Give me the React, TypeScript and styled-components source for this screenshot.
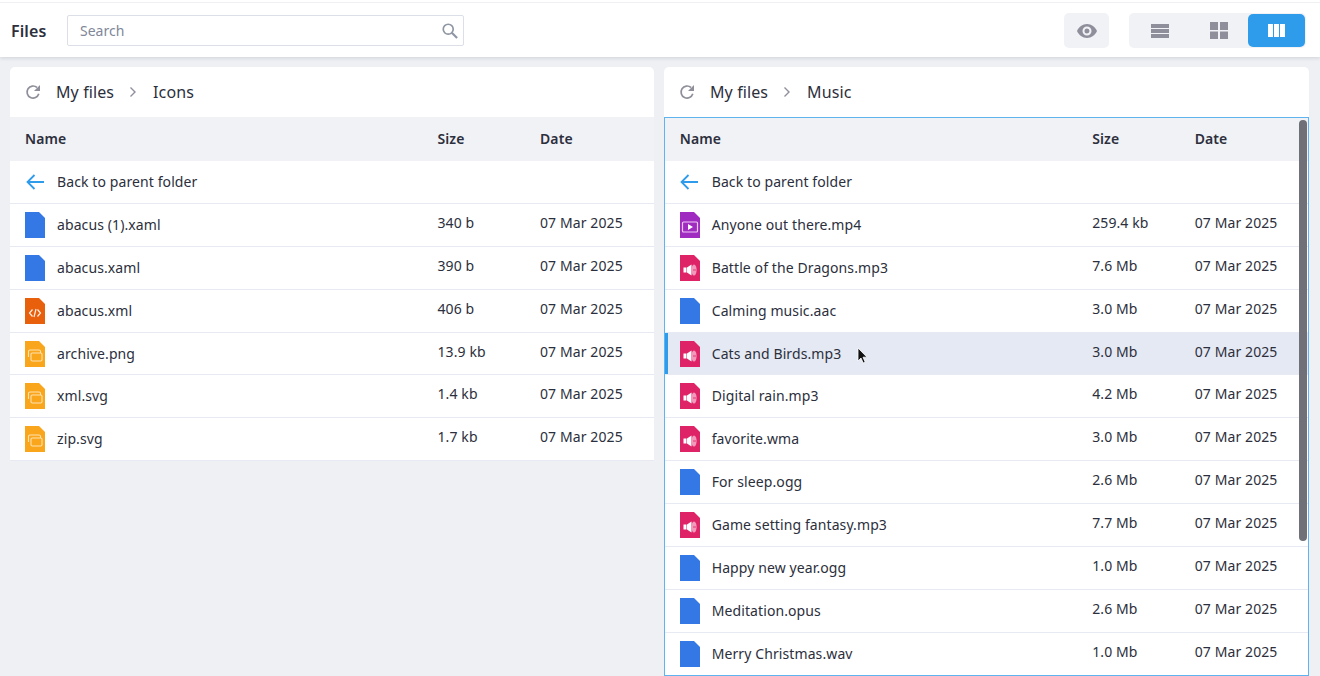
import React from 'react';
import styled, { createGlobalStyle } from 'styled-components';

const GlobalStyle = createGlobalStyle`
  html, body {
    margin: 0;
    height: 100%;
    overflow: hidden;
    background: #eef0f4;
    font-family: "Noto Sans", "Open Sans", sans-serif;
    color: #2c2f3c;
  }
  * { box-sizing: border-box; }
`;

/* Page */
const Page = styled.div`
  height: 676px;
  display: flex;
  flex-direction: column;
  overflow: hidden;
`;

/* Toolbar */
const Toolbar = styled.header`
  height: 57px;
  flex: none;
  display: flex;
  align-items: center;
  padding: 4px 14px 0 11px;
  background: #fff;
  box-shadow: inset 0 2px 0 #fff, inset 0 3px 0 #eef0f4, 0 1px 4px rgba(44, 47, 60, 0.16);
  position: relative;
  z-index: 1;
`;

const Title = styled.div`
  font-size: 16px;
  font-weight: 600;
  line-height: 22px;
  width: 56px;
  letter-spacing: 0.1px;
`;

const SearchBox = styled.div`
  width: 397px;
  height: 31px;
  display: flex;
  align-items: center;
  justify-content: space-between;
  padding: 0 5px 0 12px;
  border: 1px solid #dcdfe8;
  border-radius: 2px;
  background: #fff;
  font-size: 14px;
  color: #7f8799;
`;

const Spacer = styled.div`
  flex: 1;
`;

const ToolGroup = styled.div`
  display: flex;
  align-items: center;
  height: 35px;
  padding: 1px;
  border-radius: 5px;
  background: #f1f2f6;
`;

const EyeGroup = styled(ToolGroup)`
  width: 45px;
  justify-content: center;
  margin-right: 20px;
`;

const ViewButton = styled.div<{ $active?: boolean }>`
  width: ${p => (p.$active ? '57px' : '59px')};
  height: 33px;
  display: flex;
  align-items: center;
  justify-content: center;
  border-radius: 5px;
  background: ${p => (p.$active ? '#2f9ceb' : 'transparent')};
  color: ${p => (p.$active ? '#fff' : '#8f8f9c')};
`;

/* Panels */
const Panels = styled.main`
  flex: 1;
  min-height: 0;
  display: grid;
  grid-template-columns: 644px 645px;
  gap: 10px;
  padding: 10px 11px 0 10px;
`;

const Panel = styled.section`
  min-height: 0;
  display: flex;
  flex-direction: column;
  border-radius: 5px 5px 0 0;
  overflow: hidden;
`;

const Breadcrumbs = styled.div`
  height: 50px;
  flex: none;
  display: flex;
  align-items: center;
  padding-left: 15px;
  background: #fff;
  font-size: 16px;
  letter-spacing: 0.1px;
  color: #2c2f3c;
`;

const Refresh = styled.span`
  display: flex;
  width: 31px;
  color: #8f8f9c;
`;

const Chevron = styled.span`
  display: flex;
  margin: 0 16px 0 15px;
  color: #8f8f9c;
`;

const Table = styled.div<{ $focused?: boolean }>`
  position: relative;
  flex: 1;
  min-height: 0;
  overflow: hidden;
  padding-left: ${p => (p.$focused ? '0.7px' : '0')};

  &::after {
    content: '';
    display: ${p => (p.$focused ? 'block' : 'none')};
    position: absolute;
    inset: 0;
    border: 1px solid #5fb3ee;
    pointer-events: none;
  }
`;

const Row = styled.div`
  display: grid;
  grid-template-columns: 412.5px 102.5px 1fr;
  align-items: center;
  height: 42.9px;
  padding-left: 15px;
  font-size: 14px;
  letter-spacing: 0.1px;
  background: #fff;
  border-bottom: 1px solid #e8eaf3;
`;

const HeadRow = styled(Row)`
  height: 44px;
  padding-bottom: 1px;
  background: #f1f2f6;
  border-bottom: none;
  font-weight: 600;
`;

const DataRow = styled(Row)<{ $selected?: boolean }>`
  position: relative;
  background: ${p => (p.$selected ? '#e5e9f3' : '#fff')};
  box-shadow: ${p => (p.$selected ? 'inset 3px 0 0 #2f9ceb' : 'none')};
`;

const NameCell = styled.div`
  display: flex;
  align-items: center;
  gap: 12px;
`;

const FileName = styled.span`
  margin-top: -1px;
`;

const MetaCell = styled.div`
  margin-top: -5px;
`;

const BackIcon = styled.span`
  display: flex;
  width: 20px;
  justify-content: center;
  color: #2f9ceb;
`;

const Scrollbar = styled.div`
  position: absolute;
  top: 3px;
  right: 2px;
  width: 8px;
  height: 421px;
  border-radius: 4px;
  background: #6f7078;
`;

const Cursor = styled.svg`
  position: absolute;
  left: 192px;
  top: 14px;
`;

/* Icons */
const iconColors = {
  file: '#3478e5',
  code: '#e9600c',
  image: '#f9a61c',
  video: '#a02bc0',
  audio: '#de2466',
};

type FileKind = keyof typeof iconColors;

const FileIcon = ({ kind }: { kind: FileKind }) => (
  <svg width="20" height="26" viewBox="0 0 20 26" style={{ flex: 'none' }}>
    <path d="M0 0H14L20 6V26H0Z" fill={iconColors[kind]} />
    {kind === 'code' && (
      <path d="M7.5 11.5 4.5 15l3 3.5M12.5 11.5l3 3.5-3 3.5M11 11l-2 8" fill="none" stroke="#fff" strokeWidth="1.2" opacity=".9" />
    )}
    {kind === 'image' && (
      <g fill="none" stroke="#ffe2ae" strokeWidth="1.1">
        <path d="M3.500 16V10.500a1.500 1.500 0 0 1 1.500-1.500h9a1.500 1.500 0 0 1 1.500 1.500V12" />
        <rect x="6" y="12" width="11" height="8" rx="1.200" />
      </g>
    )}
    {kind === 'video' && (
      <g>
        <rect x="2.5" y="10" width="15" height="10" rx="1" fill="none" stroke="#f0c8f5" strokeWidth="1.2" />
        <path d="M8 12v6l5-3Z" fill="#fff" />
      </g>
    )}
    {kind === 'audio' && (
      <g>
        <rect x="3.500" y="12.500" width="3" height="5" fill="#fff" />
        <path d="M7 12.500 11.500 9.500V20.500L7 17.500Z" fill="#fff" />
        <ellipse cx="14" cy="15" rx="2.600" ry="5.500" fill="#f29abb" />
        <path d="M13 15h3" stroke="#de2466" strokeWidth=".8" />
      </g>
    )}
  </svg>
);

const ArrowLeft = () => (
  <svg width="19" height="16" viewBox="0 0 19 16" fill="none" stroke="currentColor" strokeWidth="1.800">
    <path d="M18 8H1.500M8.500 1 1.500 8l7 7" />
  </svg>
);

const RefreshIcon = () => (
  <svg width="16" height="16" viewBox="0 0 16 16" fill="none" stroke="currentColor" strokeWidth="1.700">
    <path d="M13.800 9.800A6 6 0 1 1 12 3.500" />
    <path d="M15 1v6H9Z" fill="currentColor" stroke="none" />
  </svg>
);

const ChevronIcon = () => (
  <svg width="8" height="12" viewBox="0 0 8 12" fill="none" stroke="currentColor" strokeWidth="1.400">
    <path d="M1.500 1.500 6 6l-4.500 4.500" />
  </svg>
);

const SearchIcon = () => (
  <svg width="16" height="16" viewBox="0 0 18 18" fill="none" stroke="#8f96a3" strokeWidth="1.900">
    <circle cx="7" cy="7" r="5.600" />
    <path d="m11 11 6 6" strokeWidth="2.400" />
  </svg>
);

const EyeIcon = () => (
  <svg width="20" height="14" viewBox="0 0 20 14" style={{ color: '#8f8f9c' }}>
    <path
      fillRule="evenodd"
      fill="currentColor"
      d="M10 0C5.500 0 1.800 2.900 0 7c1.800 4.100 5.500 7 10 7s8.200-2.900 10-7c-1.800-4.100-5.500-7-10-7Zm0 11.500A4.500 4.500 0 1 1 10 2.500a4.500 4.500 0 0 1 0 9ZM10 4.500a2.500 2.500 0 1 0 0 5 2.500 2.500 0 0 0 0-5Z"
    />
  </svg>
);

const ListIcon = () => (
  <svg width="18" height="14" viewBox="0 0 18 14" fill="currentColor">
    <rect width="18" height="4" />
    <rect y="5" width="18" height="4" />
    <rect y="10" width="18" height="4" />
  </svg>
);

const GridIcon = () => (
  <svg width="18" height="17" viewBox="0 0 18 17" fill="currentColor">
    <rect width="8" height="8" />
    <rect x="10" width="8" height="8" />
    <rect y="9.500" width="8" height="7.500" />
    <rect x="10" y="9.500" width="8" height="7.500" />
  </svg>
);

const ColumnsIcon = () => (
  <svg width="17" height="13" viewBox="0 0 17 13" fill="currentColor">
    <rect width="5" height="13" />
    <rect x="6" width="5" height="13" />
    <rect x="12" width="5" height="13" />
  </svg>
);

/* Data */
type FileItem = { name: string; size: string; kind: FileKind; selected?: boolean };

const DATE = '07 Mar 2025';

const iconFiles: FileItem[] = [
  { name: 'abacus (1).xaml', size: '340 b', kind: 'file' },
  { name: 'abacus.xaml', size: '390 b', kind: 'file' },
  { name: 'abacus.xml', size: '406 b', kind: 'code' },
  { name: 'archive.png', size: '13.9 kb', kind: 'image' },
  { name: 'xml.svg', size: '1.4 kb', kind: 'image' },
  { name: 'zip.svg', size: '1.7 kb', kind: 'image' },
];

const musicFiles: FileItem[] = [
  { name: 'Anyone out there.mp4', size: '259.4 kb', kind: 'video' },
  { name: 'Battle of the Dragons.mp3', size: '7.6 Mb', kind: 'audio' },
  { name: 'Calming music.aac', size: '3.0 Mb', kind: 'file' },
  { name: 'Cats and Birds.mp3', size: '3.0 Mb', kind: 'audio', selected: true },
  { name: 'Digital rain.mp3', size: '4.2 Mb', kind: 'audio' },
  { name: 'favorite.wma', size: '3.0 Mb', kind: 'audio' },
  { name: 'For sleep.ogg', size: '2.6 Mb', kind: 'file' },
  { name: 'Game setting fantasy.mp3', size: '7.7 Mb', kind: 'audio' },
  { name: 'Happy new year.ogg', size: '1.0 Mb', kind: 'file' },
  { name: 'Meditation.opus', size: '2.6 Mb', kind: 'file' },
  { name: 'Merry Christmas.wav', size: '1.0 Mb', kind: 'file' },
];

const FilePanel = ({ folder, files, focused }: { folder: string; files: FileItem[]; focused?: boolean }) => (
  <Panel>
    <Breadcrumbs>
      <Refresh><RefreshIcon /></Refresh>
      My files
      <Chevron><ChevronIcon /></Chevron>
      {folder}
    </Breadcrumbs>
    <Table $focused={focused}>
      <HeadRow>
        <div>Name</div>
        <div>Size</div>
        <div>Date</div>
      </HeadRow>
      <DataRow>
        <NameCell>
          <BackIcon><ArrowLeft /></BackIcon>
          <FileName>Back to parent folder</FileName>
        </NameCell>
      </DataRow>
      {files.map(file => (
        <DataRow key={file.name} $selected={file.selected}>
          <NameCell>
            <FileIcon kind={file.kind} />
            <FileName>{file.name}</FileName>
            {file.selected && (
              <Cursor width="11" height="17" viewBox="0 0 11 17">
                <path d="M1 1v13l3-3 2.200 5 2-1-2.200-4.800H10Z" fill="#111" stroke="#fff" strokeWidth=".8" />
              </Cursor>
            )}
          </NameCell>
          <MetaCell>{file.size}</MetaCell>
          <MetaCell>{DATE}</MetaCell>
        </DataRow>
      ))}
      {focused && <Scrollbar />}
    </Table>
  </Panel>
);

export default function App() {
  return (
    <Page>
      <GlobalStyle />
      <Toolbar>
        <Title>Files</Title>
        <SearchBox>
          Search
          <SearchIcon />
        </SearchBox>
        <Spacer />
        <EyeGroup><EyeIcon /></EyeGroup>
        <ToolGroup>
          <ViewButton><ListIcon /></ViewButton>
          <ViewButton><GridIcon /></ViewButton>
          <ViewButton $active><ColumnsIcon /></ViewButton>
        </ToolGroup>
      </Toolbar>
      <Panels>
        <FilePanel folder="Icons" files={iconFiles} />
        <FilePanel folder="Music" files={musicFiles} focused />
      </Panels>
    </Page>
  );
}
